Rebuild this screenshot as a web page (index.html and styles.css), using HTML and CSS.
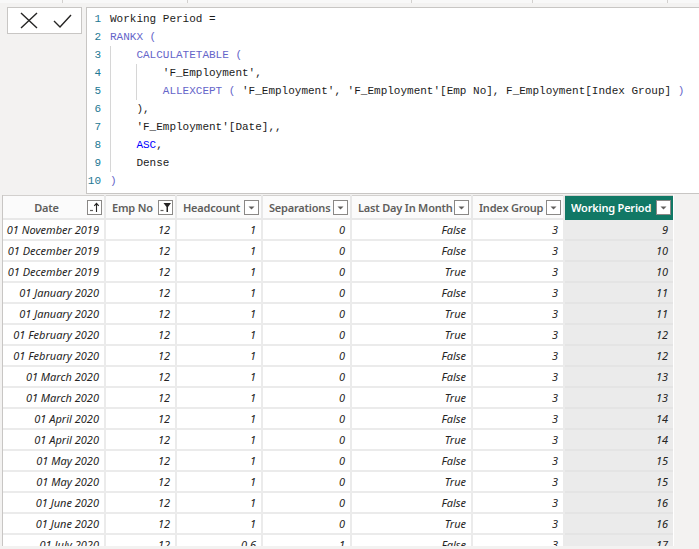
FILE: index.html
```html
<!DOCTYPE html>
<html>
<head>
<meta charset="utf-8">
<link rel="stylesheet" href="styles.css">
</head>
<body>
<div class="topstrip">
  <div class="ts ts1"></div><div class="ts ts2"></div><div class="ts ts3"></div><div class="ts ts4"></div><div class="ts ts5"></div><div class="ts ts6"></div>
</div>
<div class="formula-row">
  <div class="commit">
    <svg width="18" height="17" viewBox="0 0 18 17"><path d="M1 1 L17 16 M17 1 L1 16" stroke="#252423" stroke-width="1.4" fill="none"/></svg>
    <svg width="19" height="14" viewBox="0 0 19 14"><path d="M1 7 L7 13 L18 1" stroke="#252423" stroke-width="1.4" fill="none"/></svg>
  </div>
  <div class="editor">
    <div class="gutter">
      <div>1</div><div>2</div><div>3</div><div>4</div><div>5</div><div>6</div><div>7</div><div>8</div><div>9</div><div>10</div>
    </div>
    <div class="code">
      <div class="ln">Working Period =</div>
      <div class="ln"><span class="fn">RANKX (</span></div>
      <div class="ln"><span class="g"></span><span class="fn">CALCULATETABLE (</span></div>
      <div class="ln"><span class="g"></span><span class="g"></span>'F_Employment',</div>
      <div class="ln"><span class="g"></span><span class="g"></span><span class="fn">ALLEXCEPT (</span> 'F_Employment', 'F_Employment'[Emp No], F_Employment[Index Group] <span class="fn">)</span></div>
      <div class="ln"><span class="g"></span>),</div>
      <div class="ln"><span class="g"></span>'F_Employment'[Date],,</div>
      <div class="ln"><span class="g"></span><span class="kw">ASC</span>,</div>
      <div class="ln"><span class="g"></span>Dense</div>
      <div class="ln"><span class="fn">)</span></div>
    </div>
  </div>
</div>
<div class="grid-wrap">
  <table class="grid">
    <colgroup>
      <col class="c1"><col class="c2"><col class="c3"><col class="c4"><col class="c5"><col class="c6"><col class="c7">
    </colgroup>
    <thead>
      <tr>
        <th><div class="hd center"><span class="ht">Date</span>
          <svg class="ico" width="15" height="15" viewBox="0 0 15 15"><rect x="0.5" y="0.5" width="14" height="14" fill="#fff" stroke="#8a8886"/><path d="M3 10.5 H6" stroke="#605e5c" stroke-width="1.2"/><path d="M9.5 12 V3.5 M7.3 5.8 L9.5 3.3 L11.7 5.8" stroke="#252423" stroke-width="1.1" fill="none"/></svg></div></th>
        <th><div class="hd"><span class="ht">Emp No</span>
          <svg class="ico" width="15" height="15" viewBox="0 0 15 15"><rect x="0.5" y="0.5" width="14" height="14" fill="#fff" stroke="#8a8886"/><path d="M2.5 10.5 H5.5" stroke="#605e5c" stroke-width="1.2"/><path d="M5.5 3 H13 L10 7 V12 H8.5 V7 Z" fill="#252423"/></svg></div></th>
        <th><div class="hd"><span class="ht">Headcount</span><svg class="ico" width="15" height="15" viewBox="0 0 15 15"><rect x="0.5" y="0.5" width="14" height="14" fill="#fff" stroke="#8a8886"/><path d="M4.5 6.5 H10.5 L7.5 9.5 Z" fill="#605e5c"/></svg></div></th>
        <th><div class="hd"><span class="ht">Separations</span><svg class="ico" width="15" height="15" viewBox="0 0 15 15"><rect x="0.5" y="0.5" width="14" height="14" fill="#fff" stroke="#8a8886"/><path d="M4.5 6.5 H10.5 L7.5 9.5 Z" fill="#605e5c"/></svg></div></th>
        <th><div class="hd"><span class="ht">Last Day In Month</span><svg class="ico" width="15" height="15" viewBox="0 0 15 15"><rect x="0.5" y="0.5" width="14" height="14" fill="#fff" stroke="#8a8886"/><path d="M4.5 6.5 H10.5 L7.5 9.5 Z" fill="#605e5c"/></svg></div></th>
        <th><div class="hd"><span class="ht">Index Group</span><svg class="ico" width="15" height="15" viewBox="0 0 15 15"><rect x="0.5" y="0.5" width="14" height="14" fill="#fff" stroke="#8a8886"/><path d="M4.5 6.5 H10.5 L7.5 9.5 Z" fill="#605e5c"/></svg></div></th>
        <th class="sel"><div class="hd"><span class="ht">Working Period</span><svg class="ico" width="15" height="15" viewBox="0 0 15 15"><rect x="0.5" y="0.5" width="14" height="14" fill="#fff" stroke="#8a8886"/><path d="M4.5 6.5 H10.5 L7.5 9.5 Z" fill="#605e5c"/></svg></div></th>
      </tr>
    </thead>
    <tbody>
      <tr><td>01 November 2019</td><td>12</td><td>1</td><td>0</td><td>False</td><td>3</td><td class="sel">9</td></tr>
      <tr><td>01 December 2019</td><td>12</td><td>1</td><td>0</td><td>False</td><td>3</td><td class="sel">10</td></tr>
      <tr><td>01 December 2019</td><td>12</td><td>1</td><td>0</td><td>True</td><td>3</td><td class="sel">10</td></tr>
      <tr><td>01 January 2020</td><td>12</td><td>1</td><td>0</td><td>False</td><td>3</td><td class="sel">11</td></tr>
      <tr><td>01 January 2020</td><td>12</td><td>1</td><td>0</td><td>True</td><td>3</td><td class="sel">11</td></tr>
      <tr><td>01 February 2020</td><td>12</td><td>1</td><td>0</td><td>True</td><td>3</td><td class="sel">12</td></tr>
      <tr><td>01 February 2020</td><td>12</td><td>1</td><td>0</td><td>False</td><td>3</td><td class="sel">12</td></tr>
      <tr><td>01 March 2020</td><td>12</td><td>1</td><td>0</td><td>False</td><td>3</td><td class="sel">13</td></tr>
      <tr><td>01 March 2020</td><td>12</td><td>1</td><td>0</td><td>True</td><td>3</td><td class="sel">13</td></tr>
      <tr><td>01 April 2020</td><td>12</td><td>1</td><td>0</td><td>False</td><td>3</td><td class="sel">14</td></tr>
      <tr><td>01 April 2020</td><td>12</td><td>1</td><td>0</td><td>True</td><td>3</td><td class="sel">14</td></tr>
      <tr><td>01 May 2020</td><td>12</td><td>1</td><td>0</td><td>False</td><td>3</td><td class="sel">15</td></tr>
      <tr><td>01 May 2020</td><td>12</td><td>1</td><td>0</td><td>True</td><td>3</td><td class="sel">15</td></tr>
      <tr><td>01 June 2020</td><td>12</td><td>1</td><td>0</td><td>False</td><td>3</td><td class="sel">16</td></tr>
      <tr><td>01 June 2020</td><td>12</td><td>1</td><td>0</td><td>True</td><td>3</td><td class="sel">16</td></tr>
      <tr><td>01 July 2020</td><td>12</td><td>0.6</td><td>1</td><td>False</td><td>3</td><td class="sel">17</td></tr>
    </tbody>
  </table>
</div>
</body>
</html>
```
FILE: styles.css
```css
html, body {
  margin: 0;
  padding: 0;
  background: #f3f2f1;
  width: 699px;
  height: 549px;
  overflow: hidden;
}
body {
  font-family: "Noto Sans", "Open Sans", sans-serif;
}
.topstrip {
  height: 3px;
  display: flex;
  background: #f8f8f8;
}
.ts { height: 3px; border-right: 1px solid #d2d0ce; }
.ts1 { width: 62px; }
.ts2 { width: 124px; }
.ts3 { width: 223px; }
.ts4 { width: 120px; }
.ts5 { width: 134px; }
.ts6 { flex: 1; border-right: none; }

.formula-row {
  display: flex;
  padding: 4px 0 0 7px;
  gap: 4px;
  height: 185px;
}
.commit {
  width: 61px;
  height: 25px;
  background: #fff;
  border: 1px solid #c8c6c4;
  display: flex;
  align-items: center;
  gap: 15px;
  padding-left: 12px;
}
.commit svg { display: block; }
.editor {
  flex: 1;
  height: 183px;
  background: #fff;
  border: 1px solid #c8c6c4;
  border-right: none;
  display: flex;
  padding-top: 2px;
  font-family: "Liberation Mono", "DejaVu Sans Mono", monospace;
  font-size: 11px;
  line-height: 18px;
  color: #1b1b1b;
}
.gutter {
  width: 14px;
  text-align: right;
  color: #237893;
  margin-right: 9px;
}
.code .ln { height: 18px; white-space: pre; }
.fn { color: #6565c9; }
.kw { color: #0000ff; }
.g {
  display: inline-block;
  width: 4ch;
  height: 18px;
  vertical-align: top;
  box-shadow: inset 1px 0 0 #d6d6d6;
}

.grid-wrap {
  margin: 3px 0 0 2px;
  width: 671px;
  height: 351px;
  overflow: hidden;
  border-left: 1px solid #c8c6c4;
  background: #fff;
}
.grid {
  border-collapse: collapse;
  table-layout: fixed;
  width: 670px;
  font-size: 11px;
}
.c1 { width: 102px; }
.c2 { width: 71px; }
.c3 { width: 86px; }
.c4 { width: 89px; }
.c5 { width: 121px; }
.c6 { width: 92px; }
.c7 { width: 109px; }
.grid th {
  height: 22px;
  padding: 0;
  background: #fbfbfb;
  color: #605e5c;
  font-weight: 600;
  letter-spacing: -0.2px;
  text-align: left;
  border-right: 2px solid #e8e8e8;
  border-bottom: 2px solid #e8e8e8;
  border-top: 1px solid #d2d0ce;
}
.grid th.sel {
  background: #117865;
  color: #fff;
  border-right: none;
  border-bottom-color: #117865;
}
.hd {
  display: flex;
  align-items: center;
  height: 21px;
  padding: 0 2px 0 6px;
}
.hd .ht { flex: 1; white-space: nowrap; overflow: hidden; }
.hd.center .ht { text-align: center; padding-right: 3px; }
.ico { display: block; flex: none; }
.grid td {
  height: 19px;
  padding: 0 5px 0 0;
  text-align: right;
  font-style: italic;
  color: #252423;
  white-space: nowrap;
  overflow: hidden;
  border-right: 2px solid #ebebeb;
  border-bottom: 2px solid #ebebeb;
}
.grid td.sel {
  background: #ebebeb;
  border-right: none;
  border-bottom-color: #e4e4e4;
  padding-right: 5px;
}
```
